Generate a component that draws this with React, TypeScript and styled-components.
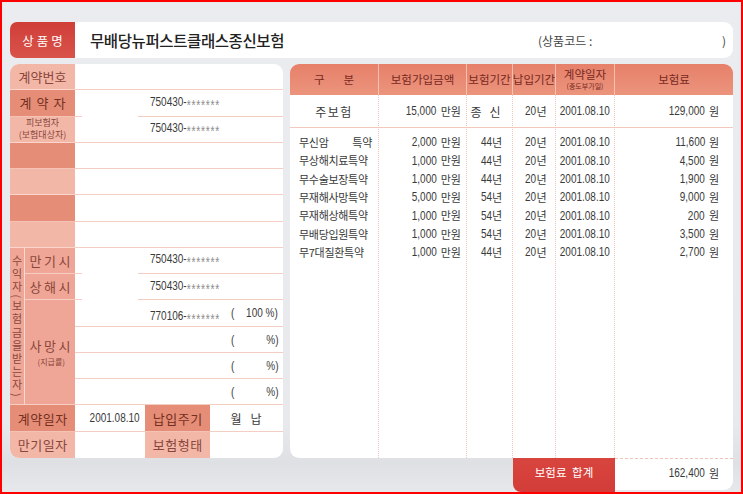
import React from 'react';
import styled, { createGlobalStyle } from 'styled-components';

const KR = `"Noto Sans CJK KR", "Noto Sans", sans-serif`;
const LAT = `"Liberation Sans", "Noto Sans CJK KR", sans-serif`;

type Tone = 'light' | 'mid' | 'dark';
type Align = 'left' | 'center' | 'right';

const toneBg: Record<Tone, string> = {
  light: '#f3b7a8',
  mid: '#efa696',
  dark: '#e68d77',
};
const justify: Record<Align, string> = {
  left: 'flex-start',
  center: 'center',
  right: 'flex-end',
};

const COLS = [89, 88, 46, 43, 59, 118];
const colTemplate = COLS.map((c) => `${c}px`).join(' ');

const GlobalStyle = createGlobalStyle`
  html, body { margin: 0; padding: 0; background: #e8e9ed; }
  body { font-family: ${KR}; }
  * { box-sizing: border-box; }
`;

const Page = styled.div`
  width: 743px;
  height: 494px;
  border: 2px solid #ff0000;
  background: linear-gradient(180deg, #ebecf0 0%, #e8e9ed 86%, #dfe0e4 94%, #e7e8ec 100%);
  padding: 20px 8px 0 8px;
  display: flex;
  flex-direction: column;
  gap: 6px;
  overflow: hidden;
`;

const TitleBar = styled.header`
  display: flex;
  height: 36px;
  flex: none;
`;

const TitleLabel = styled.div`
  width: 65px;
  display: flex;
  align-items: center;
  justify-content: center;
  background: linear-gradient(180deg, #cf3f38, #d9534a);
  border-radius: 7px 0 0 7px;
  color: #fff;
  font-size: 12.5px;
  letter-spacing: 3px;
  padding-left: 3px;
`;

const TitleBody = styled.div`
  flex: 1;
  display: flex;
  align-items: center;
  background: #fff;
  border-radius: 0 9px 9px 0;
  padding: 0 7px 0 15px;
`;

const ProductName = styled.h1`
  margin: 0;
  font-size: 15.5px;
  font-weight: 500;
  letter-spacing: -0.4px;
  color: #222;
`;

const ProductCode = styled.div`
  margin-left: auto;
  width: 188px;
  display: flex;
  justify-content: space-between;
  font-size: 12px;
  color: #444;
`;

const Main = styled.main`
  display: flex;
  gap: 7px;
  align-items: flex-start;
`;

/* ---------- shared text pieces ---------- */

const Narrow = styled.span<{ $origin: Align }>`
  display: inline-block;
  font-family: ${LAT};
  font-size: 13.5px;
  line-height: 1;
  white-space: nowrap;
  transform: scaleX(0.74);
  transform-origin: ${(p) => p.$origin} center;
`;

const Unit = styled.span<{ $gap: number }>`
  font-family: ${KR};
  font-size: 11px;
  margin-left: ${(p) => p.$gap}px;
`;

const Mask = styled.span`
  font-size: 14px;
  color: #8c8c8c;
  letter-spacing: 1px;
  vertical-align: -4px;
`;

const KrText = styled.span`
  font-family: ${KR};
  font-size: 12px;
`;

/* ---------- left info panel ---------- */

const InfoGrid = styled.section`
  width: 273px;
  height: 394px;
  display: grid;
  grid-template-columns: 15px 50px 70px 65px 73px;
  grid-template-rows: repeat(15, 1fr);
  background: #fff;
  border-radius: 9px;
  overflow: hidden;
`;

const InfoLabel = styled.div<{ $tone: Tone; $col: string; $row: string; $spacing?: number; $last?: boolean }>`
  grid-column: ${(p) => p.$col};
  grid-row: ${(p) => p.$row};
  background: ${(p) => toneBg[p.$tone]};
  color: ${(p) => (p.$tone === 'dark' ? '#74301f' : '#8a463b')};
  border-bottom: ${(p) => (p.$last ? 'none' : '1px solid rgba(255, 240, 235, 0.55)')};
  display: flex;
  flex-direction: column;
  align-items: center;
  justify-content: center;
  font-size: 13px;
  line-height: 15px;
  letter-spacing: ${(p) => p.$spacing ?? 0}px;
  padding-left: ${(p) => p.$spacing ?? 0}px;
`;

const SmallLine = styled.span`
  font-size: 9px;
  letter-spacing: 0;
  line-height: 12px;
`;

const TinyLine = styled.span`
  font-size: 8px;
  letter-spacing: 0;
  line-height: 11px;
  margin-top: 3px;
`;

const InfoValue = styled.div<{
  $col: string;
  $row: string;
  $split?: boolean;
  $last?: boolean;
  $align?: Align;
  $pl?: number;
  $pr?: number;
  $spacing?: number;
}>`
  grid-column: ${(p) => p.$col};
  grid-row: ${(p) => p.$row};
  display: flex;
  align-items: center;
  justify-content: ${(p) => justify[p.$align ?? 'left']};
  padding: 0 ${(p) => p.$pr ?? 0}px 0 ${(p) => p.$pl ?? 0}px;
  border-bottom: ${(p) => (p.$split || p.$last ? 'none' : '1px solid #f4cdc3')};
  background: ${(p) =>
    p.$split
      ? 'linear-gradient(to right, #f4cdc3 0 7px, transparent 7px 63px, #f4cdc3 63px) left bottom / 100% 1px no-repeat'
      : 'none'};
  color: #3a3a3a;
  letter-spacing: ${(p) => p.$spacing ?? 0}px;
`;

const BeneficiaryTitle = styled.div`
  grid-column: 1;
  grid-row: 8 / 14;
  background: ${toneBg.mid};
  border-right: 1px solid rgba(255, 240, 235, 0.7);
  border-bottom: 1px solid rgba(255, 240, 235, 0.55);
  writing-mode: vertical-rl;
  text-align: center;
  font-size: 11px;
  line-height: 1;
  letter-spacing: 2.2px;
  color: #8a463b;
  padding-top: 2px;
  padding-right: 2px;
  overflow: hidden;
`;

const ShareLine = styled.div`
  display: grid;
  grid-template-columns: 81px 12px 1fr;
  align-items: center;
  width: 100%;
  color: #3a3a3a;
`;

const ShareRate = styled.span`
  display: flex;
  justify-content: flex-end;
  min-width: 0;
  white-space: nowrap;
`;

/* ---------- right table ---------- */

const RightCol = styled.section`
  width: 443px;
  display: flex;
  flex-direction: column;
`;

const Table = styled.div`
  height: 394px;
  display: flex;
  flex-direction: column;
  background: #fff;
  border-radius: 9px 9px 0 9px;
  overflow: hidden;
`;

const HeaderRow = styled.div`
  display: grid;
  grid-template-columns: ${colTemplate};
  height: 31px;
  flex: none;
  background: linear-gradient(180deg, #e6806a, #ec947d);
`;

const HeaderCell = styled.div<{ $last?: boolean; $spacing?: number; $inline?: boolean }>`
  display: flex;
  flex-direction: ${(p) => (p.$inline ? 'row' : 'column')};
  align-items: center;
  justify-content: center;
  border-right: ${(p) => (p.$last ? 'none' : '1px solid rgba(255, 228, 220, 0.6)')};
  color: #76291e;
  font-size: 11.5px;
  line-height: 13px;
  white-space: nowrap;
  gap: ${(p) => p.$spacing ?? 0}px;
`;

const HeaderSub = styled.span`
  font-size: 7px;
  line-height: 10px;
`;

const Body = styled.div`
  flex: 1;
  display: grid;
  grid-template-columns: ${colTemplate};
`;

const BodyColumn = styled.div<{ $last?: boolean }>`
  display: flex;
  flex-direction: column;
  border-right: ${(p) => (p.$last ? 'none' : '1px dotted #efc4b9')};
`;

const MainCell = styled.div<{ $align: Align; $pl: number; $pr: number; $spacing: number }>`
  height: 33px;
  flex: none;
  border-bottom: 1px solid #f3c8bd;
  display: flex;
  align-items: center;
  justify-content: ${(p) => justify[p.$align]};
  padding: 0 ${(p) => p.$pr}px 0 ${(p) => p.$pl}px;
  color: #3a3a3a;
  white-space: nowrap;
  letter-spacing: ${(p) => p.$spacing}px;
`;

const RiderList = styled.div`
  padding-top: 5px;
  display: flex;
  flex-direction: column;
`;

const RiderCell = styled.div<{ $align: Align; $pl: number; $pr: number }>`
  height: 18.3px;
  display: flex;
  align-items: center;
  justify-content: ${(p) => justify[p.$align]};
  padding: 0 ${(p) => p.$pr}px 0 ${(p) => p.$pl}px;
  color: #3a3a3a;
  white-space: nowrap;
`;

const RiderName = styled.span`
  display: block;
  width: 73px;
  font-family: ${KR};
  font-size: 11px;
  letter-spacing: -0.3px;
  text-align: justify;
  text-align-last: justify;
  white-space: nowrap;
`;

const TotalRow = styled.div`
  display: flex;
  justify-content: flex-end;
  height: 34px;
`;

const TotalLabel = styled.div`
  width: 102px;
  background: linear-gradient(180deg, #d8443e, #d33d39);
  color: #fff;
  border-radius: 0 0 0 8px;
  font-size: 11.5px;
  word-spacing: 3px;
  display: flex;
  align-items: center;
  justify-content: center;
  padding-bottom: 6px;
`;

const TotalValue = styled.div`
  width: 118px;
  height: 32px;
  background: #fff;
  border-top: 1px dashed #f1c2b7;
  border-radius: 0 0 9px 0;
  display: flex;
  align-items: center;
  justify-content: flex-end;
  padding: 0 14px 4px 0;
  color: #3a3a3a;
`;

/* ---------- data ---------- */

interface Coverage {
  name: string;
  amount: string;
  term: string;
  pay: string;
  date: string;
  premium: string;
}

const mainCoverage: Coverage = {
  name: '주보험',
  amount: '15,000 만원',
  term: '종신',
  pay: '20년',
  date: '2001.08.10',
  premium: '129,000 원',
};

const riders: Coverage[] = [
  { name: '무신암 특약', amount: '2,000 만원', term: '44년', pay: '20년', date: '2001.08.10', premium: '11,600 원' },
  { name: '무상해치료특약', amount: '1,000 만원', term: '44년', pay: '20년', date: '2001.08.10', premium: '4,500 원' },
  { name: '무수술보장특약', amount: '1,000 만원', term: '44년', pay: '20년', date: '2001.08.10', premium: '1,900 원' },
  { name: '무재해사망특약', amount: '5,000 만원', term: '54년', pay: '20년', date: '2001.08.10', premium: '9,000 원' },
  { name: '무재해상해특약', amount: '1,000 만원', term: '54년', pay: '20년', date: '2001.08.10', premium: '200 원' },
  { name: '무배당입원특약', amount: '1,000 만원', term: '54년', pay: '20년', date: '2001.08.10', premium: '3,500 원' },
  { name: '무7대질환특약', amount: '1,000 만원', term: '44년', pay: '20년', date: '2001.08.10', premium: '2,700 원' },
];

interface ColumnDef {
  key: keyof Coverage;
  mainAlign: Align;
  riderAlign: Align;
  pl: number;
  pr: number;
  mainSpacing: number;
}

const columns: ColumnDef[] = [
  { key: 'name', mainAlign: 'center', riderAlign: 'left', pl: 9, pr: 0, mainSpacing: 1.5 },
  { key: 'amount', mainAlign: 'right', riderAlign: 'right', pl: 0, pr: 5, mainSpacing: 0 },
  { key: 'term', mainAlign: 'center', riderAlign: 'center', pl: 0, pr: 0, mainSpacing: 8 },
  { key: 'pay', mainAlign: 'center', riderAlign: 'center', pl: 0, pr: 0, mainSpacing: 0 },
  { key: 'date', mainAlign: 'center', riderAlign: 'center', pl: 0, pr: 0, mainSpacing: 0 },
  { key: 'premium', mainAlign: 'right', riderAlign: 'right', pl: 0, pr: 14, mainSpacing: 0 },
];

const shares = [
  { id: '770106', rate: '100' },
  { id: '', rate: '' },
  { id: '', rate: '' },
  { id: '', rate: '' },
];

function Figure({ text, origin }: { text: string; origin: Align }) {
  const m = text.match(/^([\d,.]+)(\s?)(.*)$/);
  if (!m) return <KrText>{text}</KrText>;
  const [, num, space, unit] = m;
  if (!unit) return <Narrow $origin={origin}>{num}</Narrow>;
  return (
    <>
      <Narrow $origin="right">{num}</Narrow>
      <Unit $gap={space ? 4 : 0}>{unit}</Unit>
    </>
  );
}

function IdNumber({ value }: { value: string }) {
  return (
    <Narrow $origin="left">
      {value}-<Mask>*******</Mask>
    </Narrow>
  );
}

export default function App() {
  return (
    <>
      <GlobalStyle />
      <Page>
        <TitleBar>
          <TitleLabel>상품명</TitleLabel>
          <TitleBody>
            <ProductName>무배당뉴퍼스트클래스종신보험</ProductName>
            <ProductCode>
              <span>(상품코드 :</span>
              <span>)</span>
            </ProductCode>
          </TitleBody>
        </TitleBar>

        <Main>
          <InfoGrid>
            <InfoLabel $tone="light" $col="1 / 3" $row="1">계약번호</InfoLabel>
            <InfoValue $col="3 / 6" $row="1" />

            <InfoLabel $tone="dark" $col="1 / 3" $row="2" $spacing={5}>계약자</InfoLabel>
            <InfoValue $col="3 / 6" $row="2" $split $pl={75}>
              <IdNumber value="750430" />
            </InfoValue>

            <InfoLabel $tone="light" $col="1 / 3" $row="3">
              <SmallLine>피보험자</SmallLine>
              <SmallLine>(보험대상자)</SmallLine>
            </InfoLabel>
            <InfoValue $col="3 / 6" $row="3" $pl={75}>
              <IdNumber value="750430" />
            </InfoValue>

            {[4, 5, 6, 7].map((r) => (
              <React.Fragment key={r}>
                <InfoLabel $tone={r % 2 === 0 ? 'dark' : 'light'} $col="1 / 3" $row={String(r)} />
                <InfoValue $col="3 / 6" $row={String(r)} />
              </React.Fragment>
            ))}

            <BeneficiaryTitle>수익자(보험금을받는자)</BeneficiaryTitle>

            <InfoLabel $tone="mid" $col="2" $row="8" $spacing={2.5}>만기시</InfoLabel>
            <InfoValue $col="3 / 6" $row="8" $split $pl={75}>
              <IdNumber value="750430" />
            </InfoValue>

            <InfoLabel $tone="mid" $col="2" $row="9" $spacing={2.5}>상해시</InfoLabel>
            <InfoValue $col="3 / 6" $row="9" $split $pl={75}>
              <IdNumber value="750430" />
            </InfoValue>

            <InfoLabel $tone="mid" $col="2" $row="10 / 14" $spacing={2.5}>
              <span>사망시</span>
              <TinyLine>(지급률)</TinyLine>
            </InfoLabel>
            {shares.map((s, i) => (
              <InfoValue key={i} $col="3 / 6" $row={String(10 + i)} $pl={75} $pr={5}>
                <ShareLine>
                  <span>{s.id ? <IdNumber value={s.id} /> : null}</span>
                  <Narrow $origin="left">(</Narrow>
                  <ShareRate>
                    <Narrow $origin="right">{s.rate ? `${s.rate} %)` : '%)'}</Narrow>
                  </ShareRate>
                </ShareLine>
              </InfoValue>
            ))}

            <InfoLabel $tone="dark" $col="1 / 3" $row="14" $spacing={0.5}>계약일자</InfoLabel>
            <InfoValue $col="3" $row="14" $align="right" $pr={5}>
              <Narrow $origin="right">2001.08.10</Narrow>
            </InfoValue>
            <InfoLabel $tone="dark" $col="4" $row="14" $spacing={0.5}>납입주기</InfoLabel>
            <InfoValue $col="5" $row="14" $align="center" $pl={8} $spacing={9}>
              <KrText>월납</KrText>
            </InfoValue>

            <InfoLabel $tone="light" $col="1 / 3" $row="15" $spacing={0.5} $last>만기일자</InfoLabel>
            <InfoValue $col="3" $row="15" $last />
            <InfoLabel $tone="light" $col="4" $row="15" $spacing={0.5} $last>보험형태</InfoLabel>
            <InfoValue $col="5" $row="15" $last />
          </InfoGrid>

          <RightCol>
            <Table>
              <HeaderRow>
                <HeaderCell $inline $spacing={19}>
                  <span>구</span>
                  <span>분</span>
                </HeaderCell>
                <HeaderCell>보험가입금액</HeaderCell>
                <HeaderCell>보험기간</HeaderCell>
                <HeaderCell>납입기간</HeaderCell>
                <HeaderCell>
                  <span>계약일자</span>
                  <HeaderSub>(중도부가일)</HeaderSub>
                </HeaderCell>
                <HeaderCell $last>보험료</HeaderCell>
              </HeaderRow>
              <Body>
                {columns.map((col, ci) => (
                  <BodyColumn key={col.key} $last={ci === columns.length - 1}>
                    <MainCell
                      $align={col.mainAlign}
                      $pl={col.key === 'name' ? 0 : col.pl}
                      $pr={col.pr}
                      $spacing={col.mainSpacing}
                    >
                      {col.key === 'name' || col.key === 'term' ? (
                        <KrText>{mainCoverage[col.key]}</KrText>
                      ) : (
                        <Figure text={mainCoverage[col.key]} origin={col.mainAlign} />
                      )}
                    </MainCell>
                    <RiderList>
                      {riders.map((r) => (
                        <RiderCell key={r.name} $align={col.riderAlign} $pl={col.pl} $pr={col.pr}>
                          {col.key === 'name' ? (
                            <RiderName>{r.name}</RiderName>
                          ) : (
                            <Figure text={r[col.key]} origin={col.riderAlign} />
                          )}
                        </RiderCell>
                      ))}
                    </RiderList>
                  </BodyColumn>
                ))}
              </Body>
            </Table>
            <TotalRow>
              <TotalLabel>보험료 합계</TotalLabel>
              <TotalValue>
                <Figure text="162,400 원" origin="right" />
              </TotalValue>
            </TotalRow>
          </RightCol>
        </Main>
      </Page>
    </>
  );
}
